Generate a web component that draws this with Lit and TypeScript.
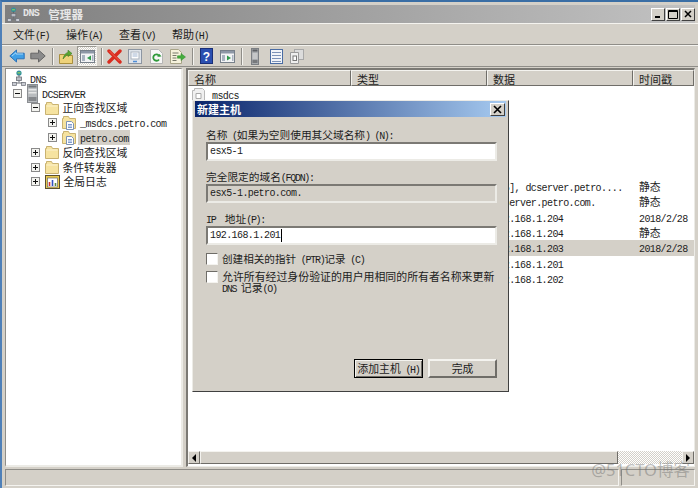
import { LitElement, html, css, svg } from "lit";
import { customElement } from "lit/decorators.js";

/* Split a string in CJK runs and Latin runs: the Latin runs use the narrow mono face. */
function t(s: string) {
  const parts = s.match(/[\u3000-\u9fff\uff00-\uffef]+|[^\u3000-\u9fff\uff00-\uffef]+/g) ?? [];
  return parts.map((p) => (/[\u3000-\u9fff\uff00-\uffef]/.test(p) ? html`<span>${p}</span>` : html`<span class="l">${p}</span>`));
}

const ico = (w: number, h: number, body: unknown) =>
  html`<svg class="ico" width=${w} height=${h} viewBox="0 0 ${w} ${h}">${body}</svg>`;

const dns = (w = 14, h = 16) => html`<svg class="ico" width=${w} height=${h} viewBox="0 0 14 16">
  <circle cx="7" cy="3" r="2.6" fill="#2f8f9f"/><path d="M5.5 2h3v1.6h-3z" fill="#7cc36a"/>
  <path d="M7 5v3" stroke="#666" stroke-width="1"/>
  <rect x="4.5" y="7" width="5" height="3.5" fill="#b9bcc4" stroke="#6b6f78" stroke-width=".8"/>
  <path d="M7 10.5v2M2 13h10" stroke="#6b6f78" stroke-width="1"/>
  <rect x=".5" y="12.5" width="4" height="3" fill="#c9ccd3" stroke="#6b6f78" stroke-width=".7"/>
  <rect x="9.5" y="12.5" width="4" height="3" fill="#c9ccd3" stroke="#6b6f78" stroke-width=".7"/>
</svg>`;

const folder = ico(14, 14, svg`
  <path d="M.5 3.5h1V1.5h5l1 2h6v10H.5z" fill="#f6e3a0" stroke="#c9b271" stroke-width="1"/>
  <path d="M1.5 5h11" stroke="#fbf2cf"/>`);

const zone = ico(14, 15, svg`
  <path d="M.5 3.5h1V1.5h5l1 2h6v10H.5z" fill="#f6e3a0" stroke="#c9b271" stroke-width="1"/>
  <path d="M4.5 6.5h5l2 2v6h-7z" fill="#fff" stroke="#7d93b5" stroke-width="1"/>
  <path d="M6 9.5h4M6 11h4M6 12.5h4" stroke="#5f83c2" stroke-width=".8"/>`);

const server = ico(11, 19, svg`
  <rect x=".5" y=".5" width="10" height="18" fill="#b9bcbf" stroke="#8b8e92"/>
  <rect x="1.5" y="1.5" width="8" height="2" fill="#72767b"/>
  <rect x="1.5" y="5" width="8" height="1.5" fill="#e6e6e6"/>
  <rect x="1.5" y="8" width="8" height="1.5" fill="#e6e6e6"/>
  <rect x="1.5" y="13" width="8" height="4" fill="#85888c"/>`);

const logs = ico(15, 15, svg`
  <rect x=".5" y="1.5" width="14" height="13" fill="#e8c94f" stroke="#5a5030"/>
  <rect x="2.5" y="4" width="10" height="9" fill="#fff" stroke="#6a6a6a" stroke-width=".7"/>
  <path d="M4.5 12V8" stroke="#d03030" stroke-width="1.6"/><path d="M7.5 12V6" stroke="#3050c0" stroke-width="1.6"/>
  <path d="M10.5 12V9" stroke="#5a8a40" stroke-width="1.6"/>`);

const doc = ico(13, 13, svg`
  <path d="M.5 2.5h2v-2h8l2 2v10H.5z" fill="#f0f0f0" stroke="#b8b8b8"/>
  <path d="M4 5.5h5v5H4z" fill="#fff" stroke="#a8a8a8"/>`);

const tb = {
  back: ico(16, 14, svg`<path d="M.8 7 7.5 1v3.2h7.7v5.6H7.5V13z" fill="#3f9fe6" stroke="#2c72b8"/><path d="M3 7l4-3.4V5h7" fill="none" stroke="#a5d6f7"/>`),
  fwd: ico(16, 14, svg`<path d="M15.2 7 8.5 1v3.2H.8v5.6h7.7V13z" fill="#8b8b8b" stroke="#666"/>`),
  up: ico(14, 15, svg`<path d="M.5 5.5h5l1 1h7v8H.5z" fill="#eed27a" stroke="#a98f3e"/><path d="M4 10C5 6 6.500 4 9 3.500V1.200L13 4.500 9 7.500V5.500C7 6 6 8 4 10z" fill="#5aa832" stroke="#3d7a20" stroke-width=".6"/>`),
  tree: ico(15, 13, svg`<rect x=".5" y=".5" width="14" height="12" fill="#f2f3f5" stroke="#77808a"/><rect x="1" y="1" width="13" height="2.500" fill="#8d97a6"/><rect x="2" y="5" width="3" height="6" fill="#a9b3c0"/><path d="M11 5.500v5L7 8z" fill="#2f9a4a"/><rect x="12" y="5" width="1.500" height="6" fill="#a9b3c0"/>`),
  del: ico(15, 15, svg`<path d="M2 2l11 11M13 2 2 13" stroke="#d92c1f" stroke-width="3.400" stroke-linecap="round"/><path d="M2.500 2l10 10" stroke="#f0604c" stroke-width="1"/>`),
  prop: ico(14, 15, svg`<rect x=".5" y=".5" width="13" height="14" fill="#dfe4ea" stroke="#8d96a2"/><rect x="3" y="3" width="8" height="7" fill="#fff" stroke="#aab2bd"/><path d="M4.500 5h5M4.500 7h5" stroke="#9fb3cf"/><path d="M5 12.500h4" stroke="#4f8ed6" stroke-width="1.500"/>`),
  refresh: ico(13, 15, svg`<path d="M.5.5h8l4 4v10H.5z" fill="#f7f7f7" stroke="#b5b5b5"/><path d="M9.500 7.500A3.200 3.200 0 1 0 9 10.500" fill="none" stroke="#2f9a3a" stroke-width="1.800"/><path d="M7 7.500h4.500L9.500 5z" fill="#2f9a3a"/>`),
  exp: ico(16, 15, svg`<path d="M.5.5h8l3 3v11H.5z" fill="#f6f2dc" stroke="#a8a488"/><path d="M2.500 4h6M2.500 6.500h4M2.500 9h4M2.500 11.500h4" stroke="#77786a"/><path d="M7.500 6.800h3.500V4.500L15.500 8 11 11.500V9.200H7.500z" fill="#45ad3e" stroke="#2f8a2d" stroke-width=".5"/>`),
  help: html`<svg class="ico" width="13" height="16" viewBox="0 0 13 16"><rect x=".5" y=".5" width="12" height="15" fill="#2b4fb0" stroke="#1a2f78"/><text x="6.500" y="12.500" text-anchor="middle" fill="#fff" font-family="Liberation Sans, sans-serif" font-weight="700" font-size="12">?</text></svg>`,
  act: ico(15, 13, svg`<rect x=".5" y=".5" width="14" height="12" fill="#f2f3f5" stroke="#77808a"/><rect x="1" y="1" width="13" height="2.500" fill="#8d97a6"/><rect x="2" y="5" width="3" height="6" fill="#a9b3c0"/><path d="M7 5.500v5l4-2.500z" fill="#2f9a4a"/><rect x="12" y="5" width="1.500" height="6" fill="#a9b3c0"/>`),
  srv: ico(8, 17, svg`<rect x=".5" y=".5" width="7" height="16" fill="#a8abae" stroke="#7c7f83"/><rect x="1.500" y="1.500" width="5" height="2" fill="#5e6165"/><path d="M1.500 6h5M1.500 8h5M1.500 10h5" stroke="#e2e2e2"/><rect x="1.500" y="12" width="5" height="3" fill="#77797c"/>`),
  list: ico(13, 15, svg`<rect x=".5" y=".5" width="12" height="14" fill="#f1f4f9" stroke="#4a6ca3"/><path d="M2 3.500h9M2 6.500h9M2 9.500h9M2 12.500h9" stroke="#7c92b8"/>`),
  copy: ico(14, 15, svg`<rect x="4.500" y=".5" width="9" height="10" fill="#dcdcdc" stroke="#a8a8a8"/><path d="M.5 3.500h8v11h-8z" fill="#efefef" stroke="#9a9a9a"/><rect x="3" y="7" width="3.500" height="4.500" fill="#fff" stroke="#777"/>`),
};

const tree = [
  { lvl: 0, exp: "", icon: dns(), text: "DNS" },
  { lvl: 1, exp: "-", icon: server, text: "DCSERVER" },
  { lvl: 2, exp: "-", icon: folder, text: "正向查找区域" },
  { lvl: 3, exp: "+", icon: zone, text: "_msdcs.petro.com" },
  { lvl: 3, exp: "+", icon: zone, text: "petro.com", sel: true },
  { lvl: 2, exp: "+", icon: folder, text: "反向查找区域" },
  { lvl: 2, exp: "+", icon: folder, text: "条件转发器" },
  { lvl: 2, exp: "+", icon: logs, text: "全局日志" },
];

const rows = [
  { icon: doc, name: "msdcs", data: "", time: "" },
  { icon: folder, name: "", data: "", time: "" },
  { icon: folder, name: "", data: "", time: "" },
  { icon: folder, name: "", data: "", time: "" },
  { icon: folder, name: "", data: "", time: "" },
  { icon: folder, name: "", data: "", time: "" },
  { icon: doc, name: "", data: "[15], dcserver.petro....", time: "静态" },
  { icon: doc, name: "", data: "dcserver.petro.com.", time: "静态" },
  { icon: doc, name: "", data: "192.168.1.204", time: "2018/2/28" },
  { icon: doc, name: "", data: "192.168.1.204", time: "静态" },
  { icon: doc, name: "", data: "192.168.1.203", time: "2018/2/28", hi: true },
  { icon: doc, name: "", data: "192.168.1.201", time: "" },
  { icon: doc, name: "", data: "192.168.1.202", time: "" },
];

@customElement("app-root")
export class AppRoot extends LitElement {
  static styles = css`
    :host {
      display: block; width: 698px; height: 488px; position: relative; overflow: hidden;
      background: #d4d0c8; color: #1c1c1c;
      font: 10.8px/13px "Noto Sans CJK SC", sans-serif;
    }
    * { box-sizing: border-box; }
    .l { font-family: "Liberation Mono", monospace; font-size: 10px; letter-spacing: -.6px; line-height: 0; }
    .ico { display: block; flex: none; }
    .win {
      height: 488px; display: flex; flex-direction: column;
      border-top: 2px solid #3a6ea5; border-left: 2px solid #4f80b8;
      padding: 3px 3px 2px 3px; background: #d4d0c8;
    }
    .title {
      height: 18px; flex: none; display: flex; align-items: center; padding: 0 0 0 2px; gap: 3px;
      background: linear-gradient(90deg, #7f7f7f, #c2c2c2); color: #e6e6e6; font-weight: 700;
    }
    .title .cjk { font-size: 11.6px; margin-left: 6px; }
    .wbtns { margin-left: auto; display: flex; gap: 1px; }
    .wb {
      width: 14px; height: 13px; background: #d4d0c8;
      border: 1px solid; border-color: #fff #404040 #404040 #fff;
      display: flex; align-items: center; justify-content: center;
    }
    .bar { flex: none; height: 22px; margin: 0 -3px 0 -3px; border-top: 1px solid #f4f3ef; border-bottom: 1px solid #8f8d88; }
    .menu { display: flex; padding: 1px 0 0 11px; align-items: center; font-size: 11px; }
    .menu div { width: 53px; }
    .menu .l, .lab .l, .chk .l, .btn .l { letter-spacing: -1.3px; }
    .tools {
      display: grid; align-items: center; justify-items: center; padding-left: 4px;
      grid-template-columns: 21px 21px 8px 20px 22px 7px 19px 22px 21px 21px 8px 20px 22px 7px 20px 22px 19px;
    }
    .sep { width: 1px; height: 17px; background: #8f8d88; box-shadow: 1px 0 #f4f3ef; }
    .tog {
      width: 20px; height: 20px; display: flex; align-items: center; justify-content: center;
      background: repeating-conic-gradient(#fff 0 25%, #d4d0c8 0 50%) 0 0 / 2px 2px;
      border: 1px solid; border-color: #9b9992 #f4f3ef #f4f3ef #9b9992;
    }
    .content { flex: 1; min-height: 0; display: flex; gap: 3px; margin-top: 1px; }
    .pane { background: #fff; border: 1px solid #ecebe6; border-top: 2px solid #7b7974; border-left: 2px solid #7b7974; }
    .left { width: 178px; flex: none; padding-top: 2px; border-width: 1px 2px 2px 1px; border-color: #8f8d88 #ecebe6 #ecebe6 #8f8d88; }
    .tr { height: 14.8px; display: flex; align-items: center; white-space: nowrap; }
    .exp {
      width: 9px; height: 9px; flex: none; margin-right: 5px; background: #f4f4f0; border: 1px solid #8a8a8a;
      position: relative;
    }
    .exp.m::before, .exp.p::before { content: ""; position: absolute; left: 1px; top: 3px; width: 5px; height: 1px; background: #111; }
    .exp.p::after { content: ""; position: absolute; left: 3px; top: 1px; width: 1px; height: 5px; background: #111; }
    .tr .ico { margin-right: 4px; }
    .tx.sel { background: #d4d0c8; padding: 1px 1px 1px 2px; margin-left: -2px; }
    .right { flex: 1; min-width: 0; display: flex; flex-direction: column; border-right: 1px solid #ecebe6; }
    .cols { display: grid; grid-template-columns: 163px 136px 146px 1fr; }
    .head { height: 16px; flex: none; background: #d4d0c8; }
    .head div {
      padding-left: 5px; line-height: 16px; font-size: 11px;
      border: 1px solid; border-color: #f4f3ef #6f6d68 #6f6d68 #f4f3ef; overflow: hidden;
    }
    .body { flex: 1; min-height: 0; overflow: hidden; padding-top: .5px; }
    .row { height: 15.4px; line-height: 15.4px; white-space: nowrap; }
    .row.hi > div:not(.nm) { background: #d4d0c8; }
    .nm { display: flex; align-items: center; gap: 7px; padding-left: 4px; }
    .dt { padding-left: 6px; }
    .tm { padding-left: 6px; }
    .sb { height: 13px; flex: none; display: grid; grid-template-columns: 12px 418px 1fr 12px; margin-bottom: 2px; }
    .sb .b, .sb .th {
      background: #d4d0c8; border: 1px solid; border-color: #f4f3ef #6f6d68 #6f6d68 #f4f3ef;
      display: flex; align-items: center; justify-content: center;
    }
    .sb .tr2 { background: repeating-conic-gradient(#fff 0 25%, #d4d0c8 0 50%) 0 0 / 2px 2px; }
    .arr-l { width: 0; height: 0; border: 4px solid transparent; border-left: 0; border-right: 4px solid #000; }
    .arr-r { width: 0; height: 0; border: 4px solid transparent; border-right: 0; border-left: 4px solid #000; }
    .status { height: 17px; flex: none; display: flex; gap: 2px; margin-top: 2px; }
    .status div { border: 1px solid; border-color: #8f8d88 #f4f3ef #f4f3ef #8f8d88; }
    .status .a { flex: 1; }
    .status .b { width: 74px; }
    .dialog {
      position: absolute; left: 192px; top: 100px; width: 317px; height: 292px;
      background: #d4d0c8; padding: 0 2px 1px 2px; display: flex; flex-direction: column;
      border: 1px solid; border-color: #ecebe6 #404040 #404040 #ecebe6;
    }
    .dt-title {
      height: 16px; flex: none; display: flex; align-items: center; padding-left: 2px; justify-content: space-between;
      background: linear-gradient(90deg, #0a246a, #a6caf0); color: #fff; font-weight: 700; font-size: 11px;
    }
    .x {
      width: 15px; height: 13px; margin-right: 1px; background: #d4d0c8; border: 1px solid;
      border-color: #fff #404040 #404040 #fff; display: flex; align-items: center; justify-content: center;
    }
    .dbody { flex: 1; display: flex; flex-direction: column; padding: 11px 9px 12px 11px; }
    .lab { height: 13px; white-space: pre; font-size: 10.7px; }
    .field {
      height: 19px; margin-top: 1px; background: #fff; padding-left: 2px; line-height: 15px; white-space: nowrap;
      border: 2px solid; border-color: #7b7974 #ecebe6 #ecebe6 #7b7974;
      display: flex; align-items: center;
    }
    .field.ro { background: #d4d0c8; }
    .caret { width: 1px; height: 13px; background: #000; margin-left: 1px; }
    .sp { margin-top: 9px; }
    .chk { display: flex; gap: 4px; line-height: 11px; font-size: 10.9px; }
    .box {
      width: 12px; height: 12px; flex: none; background: #fff; border: 1px solid;
      border-color: #6f6d68 #f4f3ef #f4f3ef #6f6d68;
    }
    .c1 { margin-top: 8px; height: 12px; font-size: 10.6px; }
    .c2 { margin-top: 6px; }
    .btns { margin-top: auto; display: flex; justify-content: flex-end; gap: 5px; }
    .btn {
      width: 69px; height: 19px; text-align: center; line-height: 15px; background: #d4d0c8;
      border: 2px solid; border-color: #f4f3ef #6f6d68 #6f6d68 #f4f3ef;
    }
    .btn.def { border: 1px solid #000; box-shadow: inset 1px 1px #f4f3ef, inset -1px -1px #6f6d68; line-height: 17px; }
    .mark {
      position: absolute; right: 8px; top: 461px; font: 16.5px/18px "Noto Sans", "Noto Sans CJK SC", sans-serif;
      color: rgba(110, 110, 110, .45);
    }
  `;

  render() {
    return html`
      <div class="win">
        <div class="title">
          ${dns(13, 15)}<span class="l">DNS</span><span class="cjk">管理器</span>
          <div class="wbtns">
            <div class="wb"><svg width="8" height="8" viewBox="0 0 8 8"><path d="M1 7h5" stroke="#000" stroke-width="2"/></svg></div>
            <div class="wb"><svg width="10" height="9" viewBox="0 0 10 9"><path d="M.5.500h9v8h-9z" fill="none" stroke="#000"/><path d="M0 1.500h10" stroke="#000"/></svg></div>
            <div class="wb"><svg width="8" height="8" viewBox="0 0 8 8"><path d="M1 1l6 6M7 1 1 7" stroke="#000" stroke-width="1.500"/></svg></div>
          </div>
        </div>
        <div class="bar menu">
          <div>${t("文件(F)")}</div><div>${t("操作(A)")}</div><div>${t("查看(V)")}</div><div>${t("帮助(H)")}</div>
        </div>
        <div class="bar tools">
          ${tb.back}${tb.fwd}<i class="sep"></i>${tb.up}<div class="tog">${tb.tree}</div><i class="sep"></i>
          ${tb.del}${tb.prop}${tb.refresh}${tb.exp}<i class="sep"></i>${tb.help}${tb.act}<i class="sep"></i>
          ${tb.srv}${tb.list}${tb.copy}
        </div>
        <div class="content">
          <div class="pane left">
            ${tree.map((n) => html`
              <div class="tr" style="padding-left:${n.lvl === 0 ? 6 : 7 + (n.lvl - 1) * 17.5}px">
                ${n.exp ? html`<i class="exp ${n.exp === "-" ? "m" : "p"}"></i>` : ""}
                ${n.icon}
                <span class="tx ${n.sel ? "sel" : ""}">${t(n.text)}</span>
              </div>`)}
          </div>
          <div class="pane right">
            <div class="cols head"><div>名称</div><div>类型</div><div>数据</div><div>时间戳</div></div>
            <div class="body">
              ${rows.map((r) => html`
                <div class="cols row ${r.hi ? "hi" : ""}">
                  <div class="nm">${r.icon}<span>${t(r.name)}</span></div>
                  <div></div>
                  <div class="dt">${t(r.data)}</div>
                  <div class="tm">${t(r.time)}</div>
                </div>`)}
            </div>
            <div class="sb">
              <div class="b"><i class="arr-l"></i></div><div class="th"></div><div class="tr2"></div><div class="b"><i class="arr-r"></i></div>
            </div>
          </div>
        </div>
        <div class="status"><div class="a"></div><div class="b"></div></div>
      </div>

      <div class="dialog">
        <div class="dt-title">
          <span>新建主机</span>
          <div class="x"><svg width="9" height="9" viewBox="0 0 9 9"><path d="M1 1l7 7M8 1 1 8" stroke="#000" stroke-width="1.600"/></svg></div>
        </div>
        <div class="dbody">
          <div class="lab">${t("名称 (如果为空则使用其父域名称) (N):")}</div>
          <div class="field">${t("esx5-1")}</div>
          <div class="lab sp">${t("完全限定的域名(FQDN):")}</div>
          <div class="field ro">${t("esx5-1.petro.com.")}</div>
          <div class="lab sp">${t("IP  地址(P):")}</div>
          <div class="field">${t("192.168.1.201")}<i class="caret"></i></div>
          <div class="chk c1"><i class="box"></i><span>${t("创建相关的指针 (PTR)记录 (C)")}</span></div>
          <div class="chk c2"><i class="box"></i><span>${t("允许所有经过身份验证的用户用相同的所有者名称来更新 DNS 记录(O)")}</span></div>
          <div class="btns">
            <div class="btn def">${t("添加主机 (H)")}</div>
            <div class="btn">完成</div>
          </div>
        </div>
      </div>
      <div class="mark">@51CTO博客</div>
    `;
  }
}
